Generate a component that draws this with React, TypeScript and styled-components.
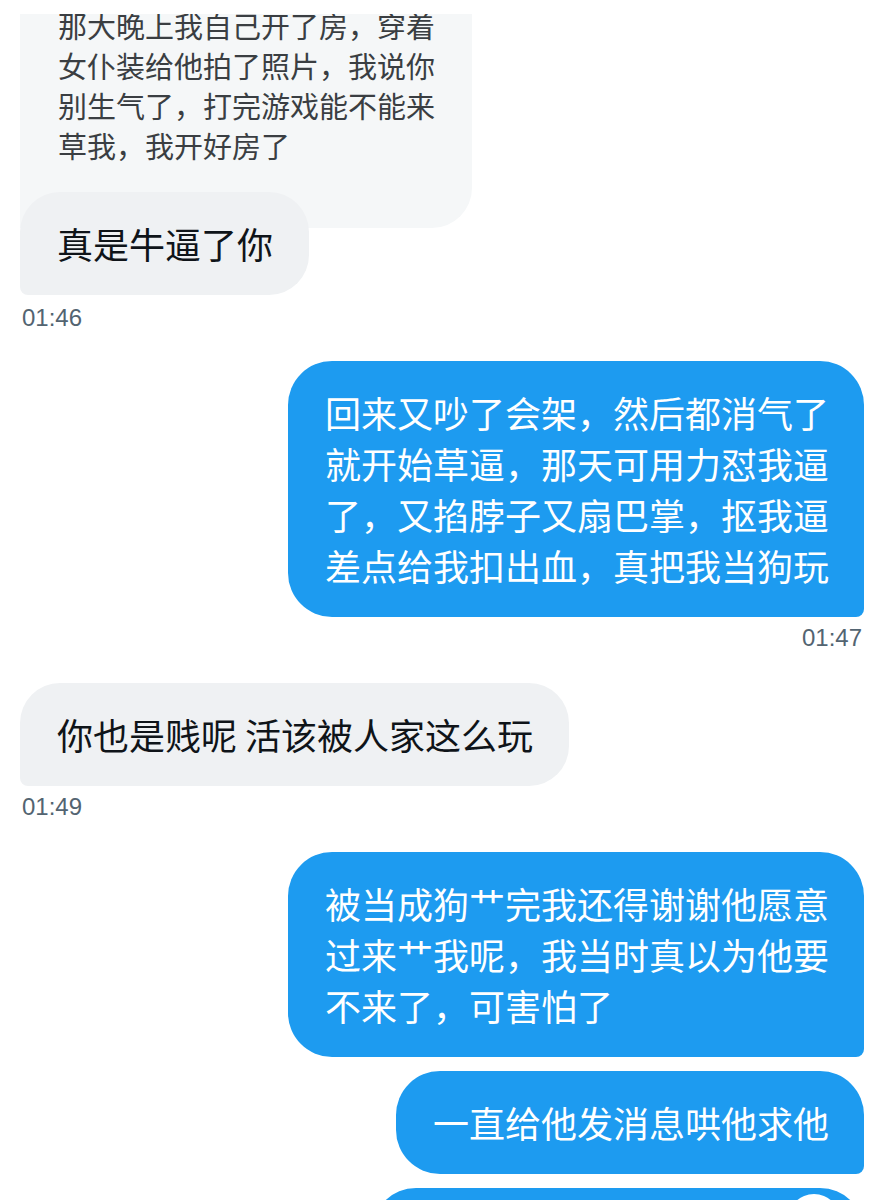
import React from "react";
import styled, { createGlobalStyle } from "styled-components";

const Global = createGlobalStyle`
	html, body {
		margin: 0;
		padding: 0;
		background: #ffffff;
	}
	body {
		font-family: "Noto Sans CJK SC", "Noto Sans", sans-serif;
		-webkit-font-smoothing: antialiased;
	}
`;

const Page = styled.div`
	display: flex;
	flex-direction: column;
	height: 1200px;
	overflow: hidden;
	padding: 14px 20px 0 20px;
	box-sizing: border-box;
`;

// older message, captured smaller and cut at the top
const FadedBubble = styled.div`
	flex-shrink: 0;
	width: 452px;
	height: 214px;
	box-sizing: border-box;
	overflow: hidden;
	padding: 0 30px 0 38px;
	background: #f5f7f8;
	color: #3a3e42;
	border-radius: 0 0 40px 0;
	font-size: 29px;
	line-height: 40px;
`;

const FadedText = styled.div`
	margin-top: -9px;
`;

const Bubble = styled.div<{ $mine?: boolean; $gap: number }>`
	position: relative;
	flex-shrink: 0;
	align-self: ${({ $mine }) => ($mine ? "flex-end" : "flex-start")};
	margin-top: ${({ $gap }) => $gap}px;
	padding: 26px ${({ $mine }) => ($mine ? "35px" : "36px")} 26px 37px;
	background: ${({ $mine }) => ($mine ? "#1d9bf0" : "#eff1f3")};
	color: ${({ $mine }) => ($mine ? "#ffffff" : "#0f1419")};
	border-radius: ${({ $mine }) => ($mine ? "44px 44px 8px 44px" : "40px 40px 40px 8px")};
	font-size: 36px;
	line-height: 51px;
	white-space: nowrap;
`;

const Line = styled.div``;

const Time = styled.div<{ $mine?: boolean; $gap: number }>`
	flex-shrink: 0;
	align-self: ${({ $mine }) => ($mine ? "flex-end" : "flex-start")};
	margin-top: ${({ $gap }) => $gap}px;
	padding: 0 2px;
	font-family: "Liberation Sans", Arial, sans-serif;
	font-size: 24px;
	line-height: 30px;
	color: #536471;
`;

const CutBubble = styled.div`
	position: relative;
	flex-shrink: 0;
	align-self: flex-end;
	margin-top: 14px;
	width: 492px;
	height: 90px;
	background: #1d9bf0;
	border-radius: 44px 44px 8px 44px;
	overflow: hidden;
`;

const Badge = styled.div`
	position: absolute;
	right: 24px;
	top: 6px;
	width: 52px;
	height: 52px;
	border-radius: 50%;
	background: #ffffff;
`;

type Msg = { mine?: boolean; lines: string[]; gap: number };
type Stamp = { time: string; mine?: boolean; gap: number };

const messages: (Msg | Stamp)[] = [
	{ lines: ["真是牛逼了你"], gap: -36 },
	{ time: "01:46", gap: 8 },
	{
		mine: true,
		gap: 28,
		lines: [
			"回来又吵了会架，然后都消气了",
			"就开始草逼，那天可用力怼我逼",
			"了，又掐脖子又扇巴掌，抠我逼",
			"差点给我扣出血，真把我当狗玩",
		],
	},
	{ time: "01:47", mine: true, gap: 6 },
	{ lines: ["你也是贱呢 活该被人家这么玩"], gap: 30 },
	{ time: "01:49", gap: 6 },
	{
		mine: true,
		gap: 30,
		lines: [
			"被当成狗艹完我还得谢谢他愿意",
			"过来艹我呢，我当时真以为他要",
			"不来了，可害怕了",
		],
	},
	{ mine: true, gap: 14, lines: ["一直给他发消息哄他求他"] },
];

const App = () => {
	return (
		<>
			<Global />
			<Page>
				<FadedBubble>
					<FadedText>
						<Line>那大晚上我自己开了房，穿着</Line>
						<Line>女仆装给他拍了照片，我说你</Line>
						<Line>别生气了，打完游戏能不能来</Line>
						<Line>草我，我开好房了</Line>
					</FadedText>
				</FadedBubble>
				{messages.map((m, i) =>
					"time" in m ? (
						<Time key={i} $mine={m.mine} $gap={m.gap}>
							{m.time}
						</Time>
					) : (
						<Bubble key={i} $mine={m.mine} $gap={m.gap}>
							{m.lines.map((l, j) => (
								<Line key={j}>{l}</Line>
							))}
						</Bubble>
					)
				)}
				<CutBubble>
					<Badge />
				</CutBubble>
			</Page>
		</>
	);
};

export default App;
